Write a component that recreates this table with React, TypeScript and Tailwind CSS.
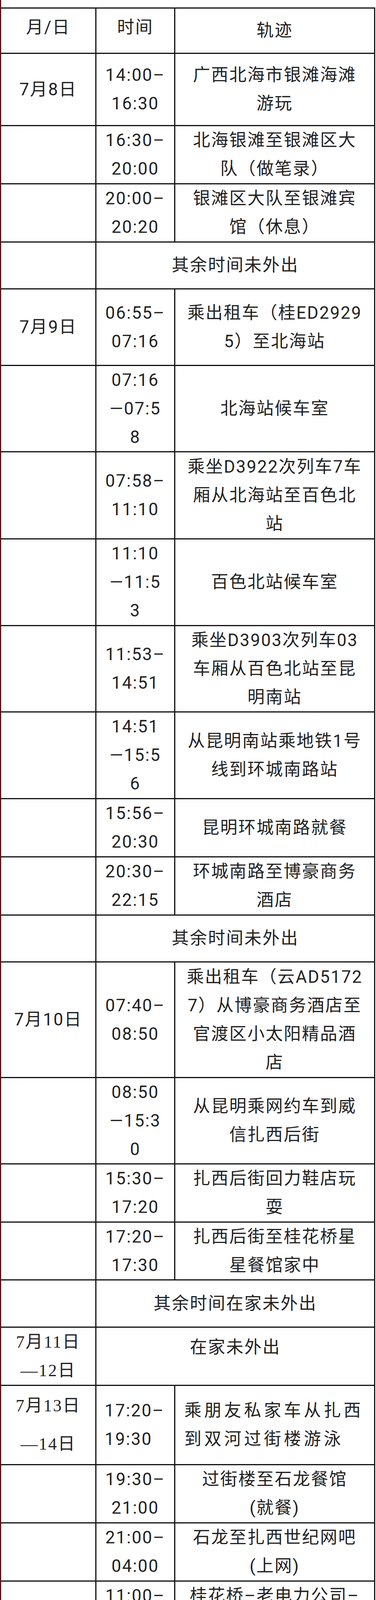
import React from "react";

type Row = {
  h: string;
  date?: string[];
  serif?: boolean;
  dateLh?: string;
  time?: string[];
  text?: string[];
  span?: string[];
  spanTop?: boolean;
  left?: boolean;
  pad?: string;
};

const rows: Row[] = [
  { h: "h-[185px]", date: ["7月8日"], time: ["14:00–", "16:30"], text: ["广西北海市银滩海滩", "游玩"] },
  { h: "h-[149px]", time: ["16:30–", "20:00"], text: ["北海银滩至银滩区大", "队（做笔录）"] },
  { h: "h-[149px]", time: ["20:00–", "20:20"], text: ["银滩区大队至银滩宾", "馆（休息）"] },
  { h: "h-[120px]", span: ["其余时间未外出"] },
  { h: "h-[196px]", date: ["7月9日"], time: ["06:55–", "07:16"], text: ["乘出租车（桂ED2929", "5）至北海站"] },
  { h: "h-[221px]", time: ["07:16", "—07:5", "8"], text: ["北海站候车室"] },
  { h: "h-[223px]", time: ["07:58–", "11:10"], text: ["乘坐D3922次列车7车", "厢从北海站至百色北", "站"] },
  { h: "h-[222px]", time: ["11:10", "—11:5", "3"], text: ["百色北站候车室"] },
  { h: "h-[221px]", time: ["11:53–", "14:51"], text: ["乘坐D3903次列车03", "车厢从百色北站至昆", "明南站"] },
  { h: "h-[222px]", time: ["14:51", "—15:5", "6"], text: ["从昆明南站乘地铁1号", "线到环城南路站"] },
  { h: "h-[149px]", time: ["15:56–", "20:30"], text: ["昆明环城南路就餐"] },
  { h: "h-[149px]", time: ["20:30–", "22:15"], text: ["环城南路至博豪商务", "酒店"] },
  { h: "h-[120px]", span: ["其余时间未外出"] },
  {
    h: "h-[296px]",
    date: ["7月10日"],
    time: ["07:40–", "08:50"],
    text: ["乘出租车（云AD5172", "7）从博豪商务酒店至", "官渡区小太阳精品酒", "店"],
  },
  { h: "h-[221px]", time: ["08:50", "—15:3", "0"], text: ["从昆明乘网约车到威", "信扎西后街"] },
  { h: "h-[149px]", time: ["15:30–", "17:20"], text: ["扎西后街回力鞋店玩", "耍"] },
  { h: "h-[148px]", time: ["17:20–", "17:30"], text: ["扎西后街至桂花桥星", "星餐馆家中"] },
  { h: "h-[121px]", span: ["其余时间在家未外出"] },
  { h: "h-[149px]", date: ["7月11日", "—12日"], serif: true, span: ["在家未外出"], spanTop: true },
  {
    h: "h-[203px]",
    date: ["7月13日", "—14日"],
    serif: true,
    dateLh: "leading-[98px]",
    time: ["17:20–", "19:30"],
    text: ["乘朋友私家车从扎西", "到双河过街楼游泳"],
    left: true,
  },
  { h: "h-[149px]", time: ["19:30–", "21:00"], text: ["过街楼至石龙餐馆", "(就餐)"] },
  { h: "h-[149px]", time: ["21:00–", "04:00"], text: ["石龙至扎西世纪网吧", "(上网)"] },
  { h: "h-[149px]", date: ["7月14日"], serif: true, time: ["11:00–", "11:35"], text: ["桂花桥–老电力公司–", "江西湾"] },
  { h: "h-[149px]", time: ["11:35–", "12:40"], text: ["从江西湾乘农村客运", "至罗布桃坝家中"] },
  { h: "h-[120px]", span: ["其余时间未外出"] },
  { h: "h-[121px]", date: ["7月15日"], serif: true, span: ["桃坝家中未外出"] },
  { h: "h-[118px]", date: ["7月16日"], serif: true, span: ["石龙集中医学隔离点"], pad: "pb-[20px]" },
];

function Lines({ lines }: { lines: string[] }) {
  return (
    <div>
      {lines.map((l, i) => (
        <div key={i} className="whitespace-nowrap">
          {l}
        </div>
      ))}
    </div>
  );
}

export default function App() {
  return (
    <div className="h-[4721px] w-[963px] overflow-hidden border-l-[3px] border-[#5a1416] bg-white pt-[19px] font-[family-name:Roboto,Noto_Sans_CJK_SC,sans-serif] text-[44px] leading-[73px] tracking-[2.5px] text-[#222]">
      <div className="w-[958px] border-r-[3px] border-b-[3px] border-[#111]">
        {/* header */}
        <div className="flex h-[116px] border-t-[3px] border-[#111]">
          <div className="flex w-[241px] shrink-0 items-center justify-center pb-[16px]">月/日</div>
          <div className="flex w-[202px] shrink-0 items-center justify-center border-l-[3px] border-[#111] pb-[16px]">
            时间
          </div>
          <div className="flex flex-1 items-center justify-center border-l-[3px] border-[#111]">轨迹</div>
        </div>

        {rows.map((r, i) => (
          <div key={i} className={`flex border-t-[3px] border-[#111] ${r.h}`}>
            <div
              className={`flex w-[241px] shrink-0 items-center justify-center text-center ${r.pad ?? ""} ${
                r.serif ? "font-[family-name:Liberation_Serif,Noto_Sans_CJK_SC,serif]" : ""
              } ${r.dateLh ?? ""}`}
            >
              {r.date && <Lines lines={r.date} />}
            </div>
            {r.span ? (
              <div
                className={`flex flex-1 items-center justify-center border-l-[3px] border-[#111] text-center ${
                  r.spanTop ? "pb-[46px]" : ""
                } ${r.pad ?? ""}`}
              >
                <Lines lines={r.span} />
              </div>
            ) : (
              <>
                <div
                  className={`flex w-[202px] shrink-0 items-center border-l-[3px] border-[#111] ${
                    r.left ? "justify-start pl-[21px] text-left" : "justify-center text-center"
                  }`}
                >
                  {r.time && <Lines lines={r.time} />}
                </div>
                <div
                  className={`flex flex-1 items-center border-l-[3px] border-[#111] ${
                    r.left ? "justify-start pl-[23px] text-left tracking-[7px]" : "justify-center text-center"
                  }`}
                >
                  {r.text && <Lines lines={r.text} />}
                </div>
              </>
            )}
          </div>
        ))}
      </div>
    </div>
  );
}
